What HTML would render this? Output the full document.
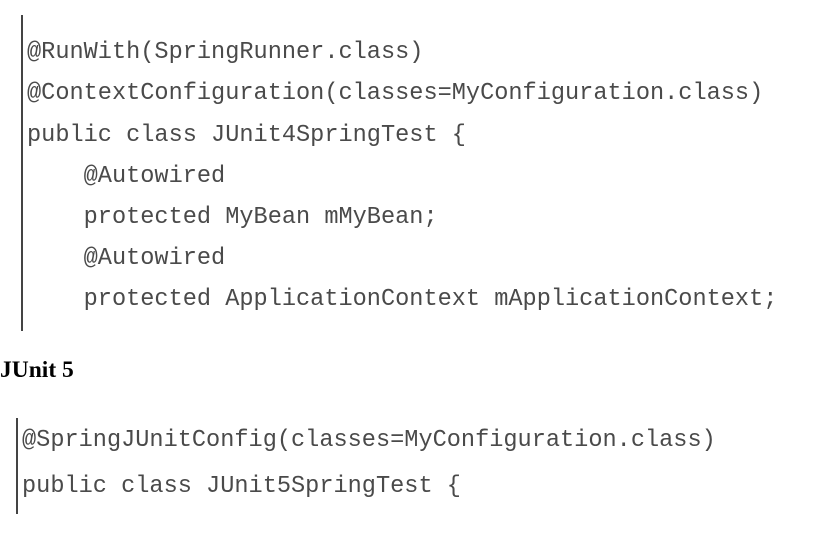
<!DOCTYPE html>
<html><head><style>
body{margin:0;width:838px;height:536px;background:#fff;position:relative;overflow:hidden}
.bar{position:absolute;width:2px;background:#444}
.c{position:absolute;font-family:"Liberation Mono",monospace;font-size:23.6px;color:#4a4a4a;white-space:pre;line-height:1;transform:translateY(-50%)}
h{position:absolute;left:0;top:357px;font-family:"Liberation Serif",serif;font-weight:bold;font-size:23.5px;color:#000}
</style></head><body>
<div class="bar" style="left:21px;top:15px;height:316px"></div>
<div class="c" style="left:27px;top:53px">@RunWith(SpringRunner.class)</div>
<div class="c" style="left:27px;top:94px">@ContextConfiguration(classes=MyConfiguration.class)</div>
<div class="c" style="left:27px;top:136px">public class JUnit4SpringTest {</div>
<div class="c" style="left:27px;top:177px">    @Autowired</div>
<div class="c" style="left:27px;top:218px">    protected MyBean mMyBean;</div>
<div class="c" style="left:27px;top:259px">    @Autowired</div>
<div class="c" style="left:27px;top:300px">    protected ApplicationContext mApplicationContext;</div>
<h>JUnit 5</h>
<div class="bar" style="left:16px;top:418px;height:96px"></div>
<div class="c" style="left:22px;top:441px">@SpringJUnitConfig(classes=MyConfiguration.class)</div>
<div class="c" style="left:22px;top:487px">public class JUnit5SpringTest {</div>
</body></html>
